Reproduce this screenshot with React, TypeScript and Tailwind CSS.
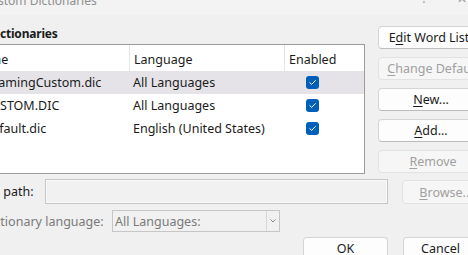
import React from 'react';

const rows = [
  { name: 'RoamingCustom.dic', lang: 'All Languages', selected: true },
  { name: 'CUSTOM.DIC', lang: 'All Languages', selected: false },
  { name: 'Default.dic', lang: 'English (United States)', selected: false },
];

function Check() {
  return (
    <span className="flex h-[13px] w-[13px] items-center justify-center rounded-[3px] bg-[#005fb8]">
      <svg width="9" height="9" viewBox="0 0 9 9" fill="none">
        <path d="M1.8 4.6 L3.7 6.4 L7.3 2.6" stroke="white" strokeWidth="1" strokeLinecap="round" strokeLinejoin="round" />
      </svg>
    </span>
  );
}

function Btn({ children, disabled, className = '' }: { children: React.ReactNode; disabled?: boolean; className?: string }) {
  return (
    <div
      className={`flex shrink-0 items-center justify-center rounded-[4px] border ${
        disabled
          ? 'border-[#e2e2e2] bg-[#f6f6f6] text-[#a0a0a0]'
          : 'border-[#d4d4d4] border-b-[#bcbcbc] bg-[#fdfdfd] text-[#1b1b1b]'
      } ${className}`}
    >
      <span className="whitespace-nowrap">{children}</span>
    </div>
  );
}

export default function App() {
  return (
    <div
      className="h-[255px] w-[468px] overflow-hidden bg-[#f0f0f0] text-[12.5px] leading-[17px] text-[#1b1b1b]"
      style={{ fontFamily: '"Noto Sans", sans-serif' }}
    >
      {/* title bar */}
      <div className="flex h-[15px] items-start overflow-hidden bg-[#f3f3f3] text-[#8e8e8e]">
        <span className="-ml-[17px] -mt-[8px] whitespace-nowrap text-[12px]">Custom Dictionaries</span>
        <span className="ml-auto -mt-[10px] mr-[30px] text-[12px] text-[#9a9a9a]">?</span>
        <span className="-mt-[10px] mr-[1px] text-[12px] text-[#9a9a9a]">✕</span>
      </div>

      <div className="-ml-[32px] flex flex-col">
        <div className="flex">
          {/* list column */}
          <div className="flex w-[397px] shrink-0 flex-col">
            <div className="mt-[10px] h-[19px] pl-[20px] text-[12px] font-bold tracking-[-0.2px] whitespace-nowrap">Dictionaries</div>
            <div className="h-[130px] border border-[#9c9c9c] bg-white">
              <div className="flex h-[26px] items-center">
                <div className="flex h-full w-[161px] items-center border-r border-[#e5e5e5] pl-[4px] pt-[2px]">Name</div>
                <div className="flex h-full w-[155px] items-center border-r border-[#e5e5e5] pl-[4px] pt-[2px]">Language</div>
                <div className="flex h-full flex-1 items-center pl-[4px] pt-[2px]">Enabled</div>
              </div>
              {rows.map((r) => (
                <div key={r.name} className={`flex h-[23px] items-center ${r.selected ? 'bg-[#e5e3e8]' : ''}`}>
                  <div className="w-[161px] pl-[14px] whitespace-nowrap">{r.name}</div>
                  <div className="w-[155px] pl-[3px] whitespace-nowrap">{r.lang}</div>
                  <div className="flex flex-1 pl-[21px]">
                    <Check />
                  </div>
                </div>
              ))}
            </div>
          </div>

          {/* buttons column */}
          <div className="ml-[13px] flex flex-col gap-[8px] pt-[11px]">
            <Btn className="h-[23px] w-[102px]">
              E<u className="underline-offset-2">d</u>it Word List
            </Btn>
            <Btn disabled className="h-[23px] w-[110px]">
              <u className="underline-offset-2">C</u>hange Default
            </Btn>
            <Btn className="h-[23px] w-[106px]">
              <u className="underline-offset-2">N</u>ew...
            </Btn>
            <Btn className="h-[23px] w-[106px]">
              <u className="underline-offset-2">A</u>dd...
            </Btn>
            <Btn disabled className="h-[23px] w-[110px]">
              <u className="underline-offset-2">R</u>emove
            </Btn>
          </div>
        </div>

        {/* path row */}
        <div className="mt-[5px] flex items-start">
          <div className="flex h-[25px] w-[77px] shrink-0 items-center pl-[12px] whitespace-nowrap">File path:</div>
          <div className="h-[25px] w-[343px] shrink-0 border border-[#c6c6c6] bg-[#f1f1f1] shadow-[inset_0_0_0_1px_#fafafa]" />
          <Btn disabled className="ml-[14px] mt-[1px] h-[24px] w-[88px]">
            <u className="underline-offset-2">B</u>rowse...
          </Btn>
        </div>

        {/* language row */}
        <div className="mt-[6px] flex items-center">
          <div className="w-[144px] shrink-0 pl-[14px] whitespace-nowrap text-[#7a7a7a]">Dictionary language:</div>
          <div className="flex h-[22px] w-[168px] shrink-0 items-center border border-[#c6c6c6] bg-[#f1f1f1] text-[#7a7a7a]">
            <span className="flex-1 pl-[2px]">All Languages:</span>
            <div className="h-[20px] w-px bg-[#d6d6d6]" />
            <svg width="10" height="20" viewBox="0 0 10 20" className="mx-[1px]">
              <path d="M2.5 8.5 L5 11 L7.5 8.5" stroke="#8a8a8a" strokeWidth="1" fill="none" />
            </svg>
          </div>
        </div>

        {/* bottom buttons */}
        <div className="mt-[5px] flex pl-[335px]">
          <Btn className="h-[23px] w-[85px]">OK</Btn>
          <Btn className="ml-[15px] h-[23px] w-[85px] !justify-start pl-[17px]">Cancel</Btn>
        </div>
      </div>
    </div>
  );
}
